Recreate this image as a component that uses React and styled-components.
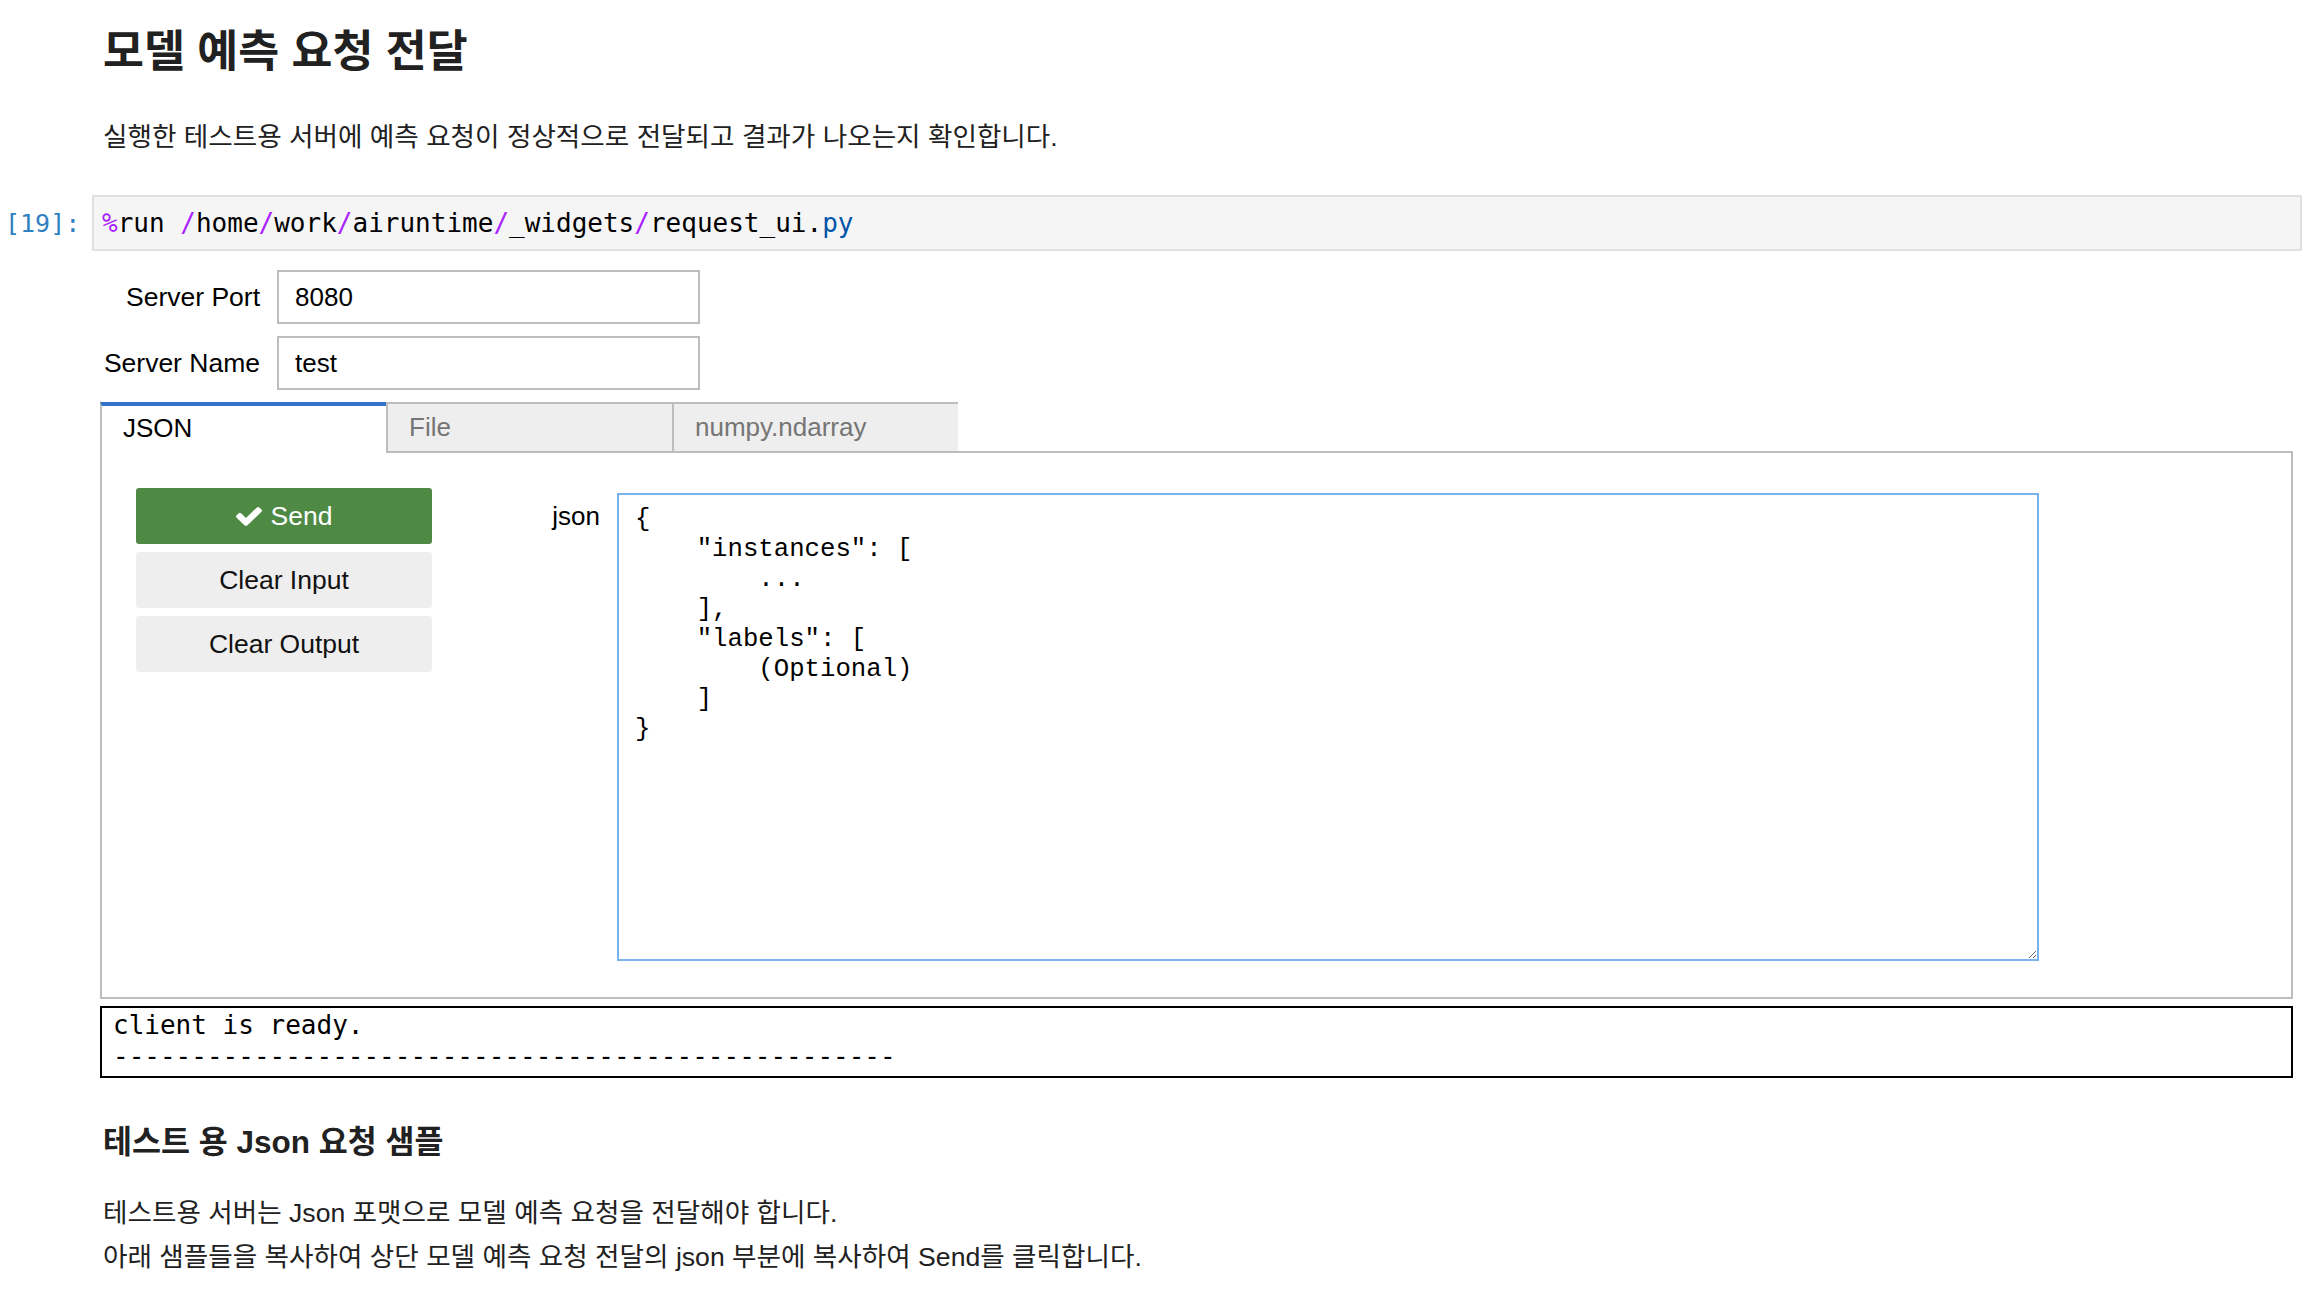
import styled, { createGlobalStyle } from "styled-components";

const GlobalStyle = createGlobalStyle`
  html, body {
    margin: 0;
    padding: 0;
    background: #ffffff;
  }
  body {
    font-family: "Liberation Sans", "Noto Sans CJK KR", sans-serif;
    color: #212121;
  }
  * {
    box-sizing: border-box;
  }
`;

const SANS = `"Liberation Sans", "Noto Sans CJK KR", sans-serif`;

const Notebook = styled.main`
  padding: 0 18px 0 0;
`;

const Markdown = styled.section`
  padding-left: 103px;
  color: #212121;
`;

const Title = styled.h2`
  margin: 26px 0 0;
  font-size: 44.5px;
  line-height: 52px;
  font-weight: 700;
`;

const SubTitle = styled.h3`
  margin: 45px 0 0;
  font-size: 31.5px;
  line-height: 38px;
  font-weight: 700;
`;

const Para = styled.p`
  margin: ${(p) => p.$top || 0}px 0 0;
  font-size: 26.6px;
  line-height: ${(p) => p.$lh || 38}px;
`;

const CodeCell = styled.div`
  display: flex;
  align-items: center;
  margin-top: 39px;
`;

const Prompt = styled.div`
  width: 92px;
  padding-left: 5px;
  font-family: "DejaVu Sans Mono", monospace;
  font-size: 25px;
  color: #307fc1;
`;

const Editor = styled.div`
  flex: 1;
  height: 56px;
  display: flex;
  align-items: center;
  padding: 0 8px;
  background: #f5f5f5;
  border: 2px solid #e0e0e0;
  font-family: "DejaVu Sans Mono", monospace;
  font-size: 26px;
  color: #000;
  white-space: pre;
`;

const Tok = styled.span`
  color: ${(p) => (p.$kind === "op" ? "#aa22ff" : p.$kind === "prop" ? "#0055aa" : "#000")};
`;

const Widgets = styled.div`
  margin: 19px 9px 0 100px;
  font-family: ${SANS};
  font-size: 26px;
  color: #000;
`;

const FieldRow = styled.div`
  display: flex;
  align-items: center;
  & + & {
    margin-top: 12px;
  }
`;

const FieldLabel = styled.label`
  width: 160px;
  margin-right: 17px;
  text-align: right;
  white-space: nowrap;
  font-size: 26.5px;
  color: #000;
`;

const TextInput = styled.input`
  width: 423px;
  height: 54px;
  padding: 0 16px;
  border: 2px solid #bdbdbd;
  font-family: ${SANS};
  font-size: 26px;
  color: #000;
  outline: none;
`;

const TabBar = styled.div`
  display: flex;
  height: 51px;
  margin-top: 12px;
`;

const Tab = styled.div`
  flex: 0 0 286px;
  display: flex;
  align-items: center;
  padding: 0 21px;
  border-left: 2px solid #bdbdbd;
  ${(p) =>
    p.$active
      ? `
    background: #ffffff;
    color: #000;
    border-top: 4px solid #3274c9;
    padding-bottom: 2px;
  `
      : `
    background: #eeeeee;
    color: #757575;
    border-top: 2px solid #bdbdbd;
    border-bottom: 2px solid #bdbdbd;
  `}
  &:last-of-type {
    flex-basis: 287px;
    border-right: 2px solid #bdbdbd;
  }
`;

const TabFill = styled.div`
  flex: 1;
  border-bottom: 2px solid #bdbdbd;
`;

const Panel = styled.div`
  display: flex;
  align-items: flex-start;
  padding: 35px 34px 36px;
  border: 2px solid #bdbdbd;
  border-top: none;
`;

const ButtonColumn = styled.div`
  display: flex;
  flex-direction: column;
  gap: 8px;
  width: 296px;
`;

const Button = styled.button`
  height: 56px;
  display: flex;
  align-items: center;
  justify-content: center;
  gap: 9px;
  border: none;
  border-radius: 3px;
  font-family: ${SANS};
  font-size: 26.5px;
  background: ${(p) => (p.$variant === "success" ? "#4f8a45" : "#eeeeee")};
  color: ${(p) => (p.$variant === "success" ? "#ffffff" : "#111")};
`;

const JsonLabel = styled.label`
  width: 160px;
  margin: 0 17px 0 8px;
  line-height: 56px;
  text-align: right;
`;

const JsonArea = styled.textarea`
  width: 1422px;
  height: 468px;
  margin-top: 5px;
  padding: 10px 16px;
  border: 2px solid #79b3ee;
  font-family: "Liberation Mono", monospace;
  font-size: 25.7px;
  line-height: 30px;
  color: #000;
  outline: none;
  resize: both;
`;

const Output = styled.pre`
  margin: 7px 0 0;
  padding: 2px 11px 4px;
  border: 2px solid #000;
  font-family: "DejaVu Sans Mono", monospace;
  font-size: 26px;
  line-height: 31px;
  color: #000;
`;

const CheckIcon = () => (
  <svg width="26" height="19" viewBox="121 334 1550 1188" preserveAspectRatio="none" fill="currentColor">
    <path d="M1671 566q0 40-28 68l-724 724-136 136q-28 28-68 28t-68-28l-136-136-362-362q-28-28-28-68t28-68l136-136q28-28 68-28t68 28l294 295 656-657q28-28 68-28t68 28l136 136q28 28 28 68z" />
  </svg>
);

const sample = `{
    "instances": [
        ...
    ],
    "labels": [
        (Optional)
    ]
}`;

export default function App() {
  return (
    <Notebook>
      <GlobalStyle />
      <Markdown>
        <Title>모델 예측 요청 전달</Title>
        <Para $top={40}>실행한 테스트용 서버에 예측 요청이 정상적으로 전달되고 결과가 나오는지 확인합니다.</Para>
      </Markdown>

      <CodeCell>
        <Prompt>[19]:</Prompt>
        <Editor>
          <Tok $kind="op">%</Tok>run <Tok $kind="op">/</Tok>home<Tok $kind="op">/</Tok>work
          <Tok $kind="op">/</Tok>airuntime<Tok $kind="op">/</Tok>_widgets<Tok $kind="op">/</Tok>request_ui.
          <Tok $kind="prop">py</Tok>
        </Editor>
      </CodeCell>

      <Widgets>
        <FieldRow>
          <FieldLabel>Server Port</FieldLabel>
          <TextInput defaultValue="8080" />
        </FieldRow>
        <FieldRow>
          <FieldLabel>Server Name</FieldLabel>
          <TextInput defaultValue="test" />
        </FieldRow>

        <TabBar>
          <Tab $active>JSON</Tab>
          <Tab>File</Tab>
          <Tab>numpy.ndarray</Tab>
          <TabFill />
        </TabBar>
        <Panel>
          <ButtonColumn>
            <Button $variant="success">
              <CheckIcon />
              Send
            </Button>
            <Button>Clear Input</Button>
            <Button>Clear Output</Button>
          </ButtonColumn>
          <JsonLabel>json</JsonLabel>
          <JsonArea defaultValue={sample} spellCheck={false} />
        </Panel>

        <Output>{"client is ready.\n" + "-".repeat(50)}</Output>
      </Widgets>

      <Markdown>
        <SubTitle>테스트 용 Json 요청 샘플</SubTitle>
        <Para $top={30} $lh={44}>
          테스트용 서버는 Json 포맷으로 모델 예측 요청을 전달해야 합니다.
          <br />
          아래 샘플들을 복사하여 상단 모델 예측 요청 전달의 json 부분에 복사하여 Send를 클릭합니다.
        </Para>
      </Markdown>
    </Notebook>
  );
}
